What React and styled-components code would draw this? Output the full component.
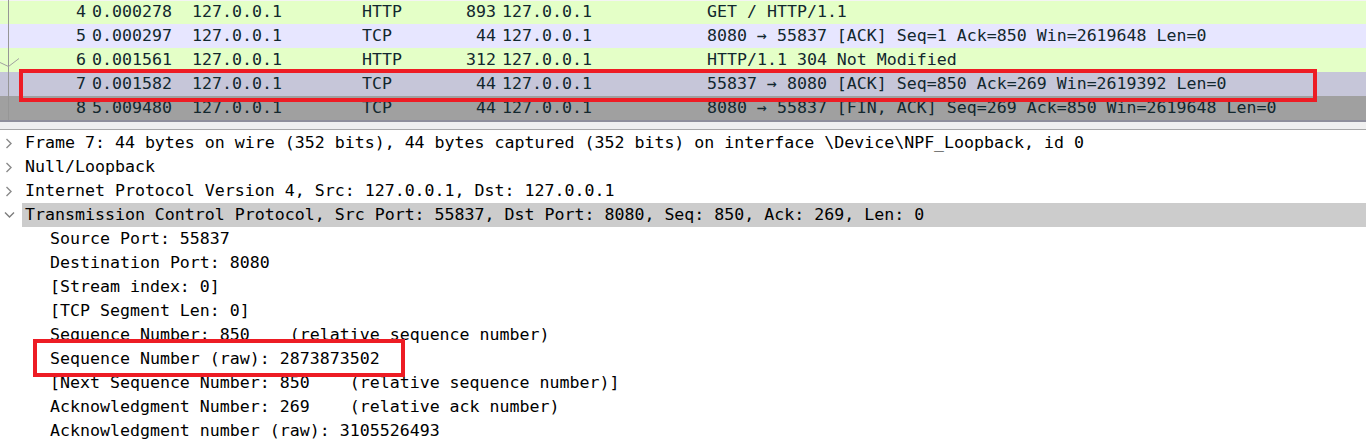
import React from "react";
import styled, { createGlobalStyle } from "styled-components";

const Global = createGlobalStyle`
  html, body { margin: 0; padding: 0; background: #ffffff; }
  body { font-family: "DejaVu Sans Mono", "Liberation Mono", monospace; }
`;

const Page = styled.div`
  position: relative;
  width: 1366px;
  height: 442px;
  overflow: hidden;
  background: #ffffff;
  font-family: "DejaVu Sans Mono", "Liberation Mono", monospace;
  font-size: 16.6px;
`;

const PacketList = styled.div`
  position: relative;
  display: flex;
  flex-direction: column;
`;

const PacketRow = styled.div`
  display: grid;
  grid-template-columns: 86px 94px 164px 58px 70px 199px 1fr;
  column-gap: 6px;
  height: 24px;
  line-height: 24px;
  background: ${(p) => p.$bg};
  color: #12272e;
  white-space: pre;
  box-shadow: ${(p) => (p.$first ? "inset 0 1px 0 #f4f4f4" : "none")};
`;

const Cell = styled.span`
  text-align: ${(p) => (p.$right ? "right" : "left")};
  overflow: hidden;
`;

const RelationMark = styled.svg`
  position: absolute;
  left: 0;
  top: 0;
  pointer-events: none;
`;

const Splitter = styled.div`
  height: 7px;
  background: #f0f0f0;
  border-top: 2px solid #8f8f9c;
  border-bottom: 1px solid #a8a8a8;
  box-sizing: content-box;
`;

const DetailTree = styled.div`
  display: flex;
  flex-direction: column;
  padding-top: 1px;
  background: #ffffff;
`;

const TreeRow = styled.div`
  display: flex;
  height: 24px;
  line-height: 24px;
  color: #000000;
  white-space: pre;
`;

const Toggle = styled.span`
  width: 22px;
  flex: 0 0 22px;
  display: flex;
  align-items: center;
  justify-content: center;
  padding-right: 4px;
  box-sizing: border-box;
`;

const Label = styled.span`
  flex: 1;
  padding-left: ${(p) => 3 + p.$depth * 25}px;
  background: ${(p) => (p.$selected ? "#cccccc" : "transparent")};
`;

const Annotation = styled.div`
  position: absolute;
  border: 4px solid #ed1c24;
  box-sizing: border-box;
  pointer-events: none;
`;

const Chevron = ({ open }) =>
  open ? (
    <svg width="11" height="8" viewBox="0 0 11 8">
      <polyline points="1,1.5 5.5,6 10,1.5" fill="none" stroke="#7d7d7d" strokeWidth="1.4" />
    </svg>
  ) : (
    <svg width="8" height="11" viewBox="0 0 8 11">
      <polyline points="1.5,1 6,5.5 1.5,10" fill="none" stroke="#8a8a8a" strokeWidth="1.4" />
    </svg>
  );

const HTTP = "#e4ffc7";
const TCP = "#e7e6ff";
const SEL = "#c6c6d9";
const FIN = "#a0a0a0";

const packets = [
  { no: 4, time: "0.000278", proto: "HTTP", len: 893, info: "GET / HTTP/1.1", bg: HTTP },
  { no: 5, time: "0.000297", proto: "TCP", len: 44, info: "8080 → 55837 [ACK] Seq=1 Ack=850 Win=2619648 Len=0", bg: TCP },
  { no: 6, time: "0.001561", proto: "HTTP", len: 312, info: "HTTP/1.1 304 Not Modified", bg: HTTP },
  { no: 7, time: "0.001582", proto: "TCP", len: 44, info: "55837 → 8080 [ACK] Seq=850 Ack=269 Win=2619392 Len=0", bg: SEL },
  { no: 8, time: "5.009480", proto: "TCP", len: 44, info: "8080 → 55837 [FIN, ACK] Seq=269 Ack=850 Win=2619648 Len=0", bg: FIN },
];

const tree = [
  { depth: 0, toggle: "closed", text: "Frame 7: 44 bytes on wire (352 bits), 44 bytes captured (352 bits) on interface \\Device\\NPF_Loopback, id 0" },
  { depth: 0, toggle: "closed", text: "Null/Loopback" },
  { depth: 0, toggle: "closed", text: "Internet Protocol Version 4, Src: 127.0.0.1, Dst: 127.0.0.1" },
  { depth: 0, toggle: "open", selected: true, text: "Transmission Control Protocol, Src Port: 55837, Dst Port: 8080, Seq: 850, Ack: 269, Len: 0" },
  { depth: 1, text: "Source Port: 55837" },
  { depth: 1, text: "Destination Port: 8080" },
  { depth: 1, text: "[Stream index: 0]" },
  { depth: 1, text: "[TCP Segment Len: 0]" },
  { depth: 1, text: "Sequence Number: 850    (relative sequence number)" },
  { depth: 1, text: "Sequence Number (raw): 2873873502" },
  { depth: 1, text: "[Next Sequence Number: 850    (relative sequence number)]" },
  { depth: 1, text: "Acknowledgment Number: 269    (relative ack number)" },
  { depth: 1, text: "Acknowledgment number (raw): 3105526493" },
];

export default function App() {
  return (
    <>
      <Global />
      <Page>
        <PacketList>
          {packets.map((p, i) => (
            <PacketRow key={p.no} $bg={p.bg} $first={i === 0}>
              <Cell $right>{p.no}</Cell>
              <Cell>{p.time}</Cell>
              <Cell>127.0.0.1</Cell>
              <Cell>{p.proto}</Cell>
              <Cell $right>{p.len}</Cell>
              <Cell>127.0.0.1</Cell>
              <Cell>{p.info}</Cell>
            </PacketRow>
          ))}
          <RelationMark width="22" height="120" viewBox="0 0 22 120">
            <line x1="8.5" y1="0" x2="8.5" y2="120" stroke="#969696" strokeWidth="1" />
            <polyline points="0,62.5 8.5,66.5 19,58.5" fill="none" stroke="#a0a0a0" strokeWidth="1" />
          </RelationMark>
        </PacketList>
        <Splitter />
        <DetailTree>
          {tree.map((r, i) => (
            <TreeRow key={i}>
              <Toggle>{r.toggle ? <Chevron open={r.toggle === "open"} /> : null}</Toggle>
              <Label $depth={r.depth} $selected={r.selected}>{r.text}</Label>
            </TreeRow>
          ))}
        </DetailTree>
        <Annotation style={{ left: 19, top: 69, width: 1298, height: 33 }} />
        <Annotation style={{ left: 33, top: 339, width: 372, height: 38 }} />
      </Page>
    </>
  );
}
